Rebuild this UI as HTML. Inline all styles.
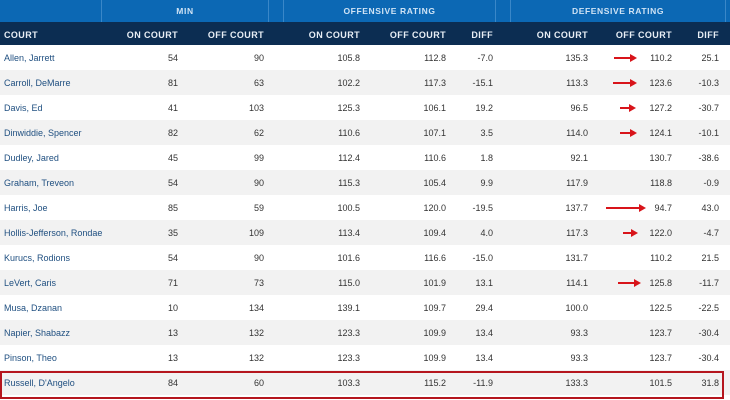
<!DOCTYPE html><html><head><style>
body{margin:0;width:730px;height:400px;overflow:hidden;background:#fff;font-family:"Liberation Sans",sans-serif;position:relative}
.top{position:absolute;left:0;top:0;width:730px;height:22px;background:#0c68b4}
.top div{position:absolute;top:0;height:22px;border-left:1px solid #3a87c8;color:#cfe3f5;font-size:8.5px;font-weight:bold;line-height:23px;text-align:center;letter-spacing:.6px}
.hdr{position:absolute;left:0;top:22px;width:730px;height:23px;background:#0c2d52;border-bottom:1px solid #061c36}
.c{position:absolute;font-size:9px;white-space:nowrap;text-align:right}
.hdr .c{color:#e8eef5;font-weight:bold;top:8px;letter-spacing:.4px}
.row{position:absolute;left:0;width:730px;height:25px}
.row .c{top:8px;color:#333}
.row .n{left:4px;text-align:left;color:#1f4f80}
.arr{position:absolute;height:2px;background:#d8141a}
.arr:after{content:"";position:absolute;right:-3px;top:-3px;border-left:7px solid #d8141a;border-top:4px solid transparent;border-bottom:4px solid transparent}
</style></head><body>
<div class="top">
<div style="left:101px;width:166px">MIN</div>
<div style="left:268px;width:14px"></div>
<div style="left:283px;width:211px">OFFENSIVE RATING</div>
<div style="left:495px;width:14px"></div>
<div style="left:510px;width:214px">DEFENSIVE RATING</div>
<div style="left:725px;width:5px"></div>
</div>
<div class="hdr">
<span class="c" style="left:4px;text-align:left">COURT</span>
<span class="c" style="right:552px">ON COURT</span>
<span class="c" style="right:466px">OFF COURT</span>
<span class="c" style="right:370px">ON COURT</span>
<span class="c" style="right:284px">OFF COURT</span>
<span class="c" style="right:237px">DIFF</span>
<span class="c" style="right:142px">ON COURT</span>
<span class="c" style="right:58px">OFF COURT</span>
<span class="c" style="right:11px">DIFF</span>
</div>
<div id="rows"></div>
<script>
var d=[["Allen, Jarrett",54,90,"105.8","112.8","-7.0","135.3","110.2","25.1"],
["Carroll, DeMarre",81,63,"102.2","117.3","-15.1","113.3","123.6","-10.3"],
["Davis, Ed",41,103,"125.3","106.1","19.2","96.5","127.2","-30.7"],
["Dinwiddie, Spencer",82,62,"110.6","107.1","3.5","114.0","124.1","-10.1"],
["Dudley, Jared",45,99,"112.4","110.6","1.8","92.1","130.7","-38.6"],
["Graham, Treveon",54,90,"115.3","105.4","9.9","117.9","118.8","-0.9"],
["Harris, Joe",85,59,"100.5","120.0","-19.5","137.7","94.7","43.0"],
["Hollis-Jefferson, Rondae",35,109,"113.4","109.4","4.0","117.3","122.0","-4.7"],
["Kurucs, Rodions",54,90,"101.6","116.6","-15.0","131.7","110.2","21.5"],
["LeVert, Caris",71,73,"115.0","101.9","13.1","114.1","125.8","-11.7"],
["Musa, Dzanan",10,134,"139.1","109.7","29.4","100.0","122.5","-22.5"],
["Napier, Shabazz",13,132,"123.3","109.9","13.4","93.3","123.7","-30.4"],
["Pinson, Theo",13,132,"123.3","109.9","13.4","93.3","123.7","-30.4"],
["Russell, D'Angelo",84,60,"103.3","115.2","-11.9","133.3","101.5","31.8"]];
var R=[552,466,370,284,237,142,58,11],h="";
d.forEach(function(r,i){h+='<div class="row" style="top:'+(45+i*25)+'px;background:'+(i%2?'#f2f2f2':'#fff')+'"><span class="c n">'+r[0]+'</span>';
for(var j=1;j<9;j++)h+='<span class="c" style="right:'+R[j-1]+'px">'+r[j]+'</span>';h+='</div>';});
var A=[[0,614,20],[1,613,21],[2,620,13],[3,620,14],[6,606,37],[7,623,12],[9,618,20]];
A.forEach(function(a){h+='<div class="arr" style="top:'+(57+a[0]*25)+'px;left:'+a[1]+'px;width:'+a[2]+'px"></div>';});
h+='<div style="position:absolute;left:0;top:371px;width:720px;height:24px;border:2px solid #b5161e"></div>';
document.getElementById("rows").innerHTML=h;
</script>
</body></html>
